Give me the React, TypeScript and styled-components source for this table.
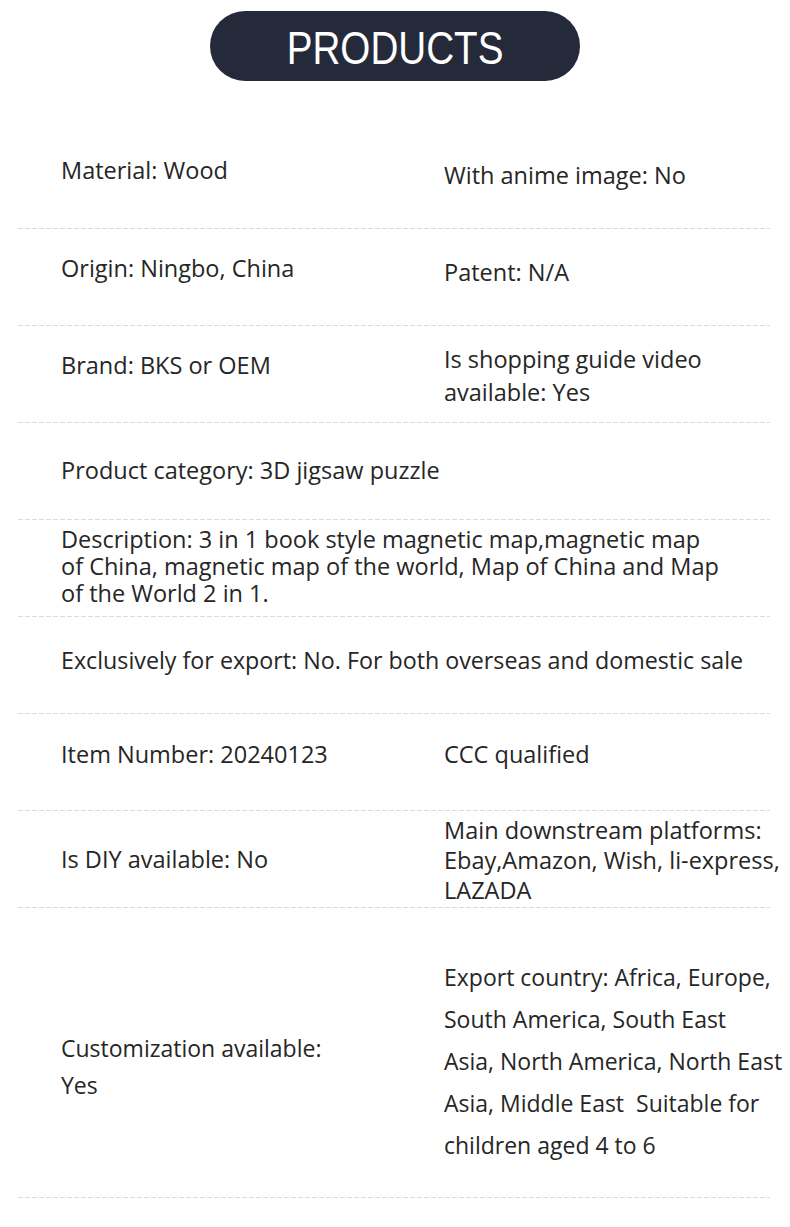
import React from "react";
import styled, { createGlobalStyle } from "styled-components";

const Global = createGlobalStyle`
  html, body { margin: 0; padding: 0; background: #ffffff; }
  body { font-family: "Open Sans", "Noto Sans", sans-serif; color: #262626; }
`;

const Page = styled.div`
  width: 790px;
  padding-top: 11px;
  padding-bottom: 30px;
`;

const Header = styled.div`
  display: flex;
  justify-content: center;
  margin-bottom: 51px;
`;

const Pill = styled.div`
  width: 370px;
  height: 70px;
  border-radius: 35px;
  background: #252a3a;
  display: flex;
  align-items: center;
  justify-content: center;
`;

const Title = styled.span`
  display: inline-block;
  font-family: "Liberation Sans", Arial, sans-serif;
  font-size: 46px;
  line-height: 1;
  color: #ffffff;
  transform: scaleX(0.84);
  margin-top: 4px;
`;

const Table = styled.div`
  margin: 0 20px 0 18px;
`;

const Row = styled.div<{ $h: number }>`
  display: grid;
  grid-template-columns: 383px 1fr;
  align-items: center;
  height: ${(p) => p.$h}px;
  padding-left: 43px;
`;

const Divider = styled.div`
  height: 1px;
  background: repeating-linear-gradient(to right, #dcdcdc 0 5px, transparent 5px 7px);
`;

const Cell = styled.div<{ $dy: number; $lh: number; $size: number; $full?: boolean }>`
  grid-column: ${(p) => (p.$full ? "1 / -1" : "auto")};
  font-size: ${(p) => p.$size}px;
  line-height: ${(p) => p.$lh}px;
  padding-top: ${(p) => (p.$dy > 0 ? p.$dy * 2 : 0)}px;
  padding-bottom: ${(p) => (p.$dy < 0 ? -p.$dy * 2 : 0)}px;
  white-space: pre;
`;

type CellData = { lines: string[]; dy: number; lh?: number; size?: number; full?: boolean };
type RowData = { h: number; cells: CellData[] };

const rows: RowData[] = [
  {
    h: 96,
    cells: [
      { lines: ["Material: Wood"], dy: -10 },
      { lines: ["With anime image: No"], dy: -5 },
    ],
  },
  {
    h: 96,
    cells: [
      { lines: ["Origin: Ningbo, China"], dy: -9 },
      { lines: ["Patent: N/A"], dy: -5 },
    ],
  },
  {
    h: 96,
    cells: [
      { lines: ["Brand: BKS or OEM"], dy: -9 },
      { lines: ["Is shopping guide video", "available: Yes"], dy: 1.5, lh: 33 },
    ],
  },
  {
    h: 96,
    cells: [{ lines: ["Product category: 3D jigsaw puzzle"], dy: -1, full: true }],
  },
  {
    h: 96,
    cells: [
      {
        lines: [
          "Description: 3 in 1 book style magnetic map,magnetic map",
          "of China, magnetic map of the world, Map of China and Map",
          "of the World 2 in 1.",
        ],
        dy: -2,
        lh: 27,
        full: true,
      },
    ],
  },
  {
    h: 96,
    cells: [
      {
        lines: ["Exclusively for export: No. For both overseas and domestic sale"],
        dy: -5,
        size: 23.25,
        full: true,
      },
    ],
  },
  {
    h: 96,
    cells: [
      { lines: ["Item Number: 20240123"], dy: -8 },
      { lines: ["CCC qualified"], dy: -8 },
    ],
  },
  {
    h: 96,
    cells: [
      { lines: ["Is DIY available: No"], dy: 0 },
      {
        lines: ["Main downstream platforms:", "Ebay,Amazon, Wish, li-express,", "LAZADA"],
        dy: 1,
        lh: 30,
      },
    ],
  },
  {
    h: 289,
    cells: [
      { lines: ["Customization available:", "Yes"], dy: 14, lh: 37, size: 23 },
      {
        lines: [
          "Export country: Africa, Europe,",
          "South America, South East",
          "Asia, North America, North East",
          "Asia, Middle East  Suitable for",
          "children aged 4 to 6",
        ],
        dy: 8.5,
        lh: 42,
        size: 23,
      },
    ],
  },
];

export default function App() {
  return (
    <Page>
      <Global />
      <Header>
        <Pill>
          <Title>PRODUCTS</Title>
        </Pill>
      </Header>
      <Table>
        {rows.map((r, i) => (
          <React.Fragment key={i}>
            <Row $h={r.h}>
              {r.cells.map((c, j) => (
                <Cell
                  key={j}
                  $dy={c.dy}
                  $lh={c.lh ?? 30}
                  $size={c.size ?? 23.5}
                  $full={c.full}
                >
                  {c.lines.join("\n")}
                </Cell>
              ))}
            </Row>
            <Divider />
          </React.Fragment>
        ))}
      </Table>
    </Page>
  );
}
